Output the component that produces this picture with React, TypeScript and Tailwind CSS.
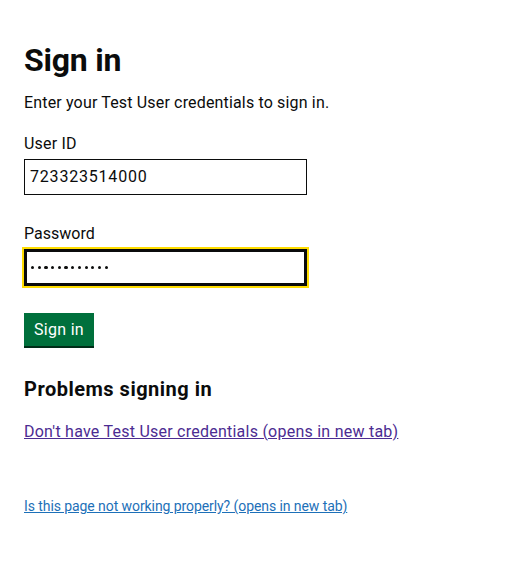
import React from "react";

export default function App() {
  const font = { fontFamily: "Roboto, 'Noto Sans', sans-serif" };
  const dots = Array.from({ length: 12 });
  return (
    <div className="min-h-[562px] w-full bg-white text-[#0b0c0c]" style={font}>
      <div className="px-6 pt-[43px]">
        <h1 className="text-[32px] font-bold leading-[35px] m-0 tracking-[-0.2px]">Sign in</h1>
        <p className="mt-[15px] text-[16px] leading-[20px] tracking-[0.16px]">Enter your Test User credentials to sign in.</p>

        <div className="mt-[21px] flex flex-col">
          <label className="text-[16px] leading-[20px] tracking-[0.2px]">User ID</label>
          <div className="mt-[5px] h-[36px] w-[283px] border border-[#0b0c0c] flex items-center px-[5px] text-[16px] tracking-[0.8px]">
            723323514000
          </div>
        </div>

        <div className="mt-[29px] flex flex-col">
          <label className="text-[16px] leading-[20px]">Password</label>
          <div className="mt-[5px] h-[37px] w-[283px] border-[3px] border-[#0b0c0c] outline outline-[2px] outline-[#ffdd00] flex items-center px-[4px] gap-[3.4px]">
            {dots.map((_, i) => (
              <span key={i} className="block w-[3.3px] h-[3.3px] rounded-full bg-[#0b0c0c]" />
            ))}
          </div>
        </div>

        <button className="mt-[27px] h-[33px] px-[10px] bg-[#00703c] text-white text-[16px] tracking-[0.3px] shadow-[0_2px_0_#002d18]">
          Sign in
        </button>

        <h2 className="mt-[31px] text-[20px] font-bold leading-[25px] tracking-[0.5px]">Problems signing in</h2>
        <a className="mt-[20px] block text-[16px] leading-[20px] text-[#4c2c92] underline tracking-[0.24px]" href="#">
          Don't have Test User credentials (opens in new tab)
        </a>

        <a className="mt-[56px] block text-[14px] leading-[17px] text-[#1d70b8] underline tracking-[-0.08px]" href="#">
          Is this page not working properly? (opens in new tab)
        </a>
      </div>
    </div>
  );
}
